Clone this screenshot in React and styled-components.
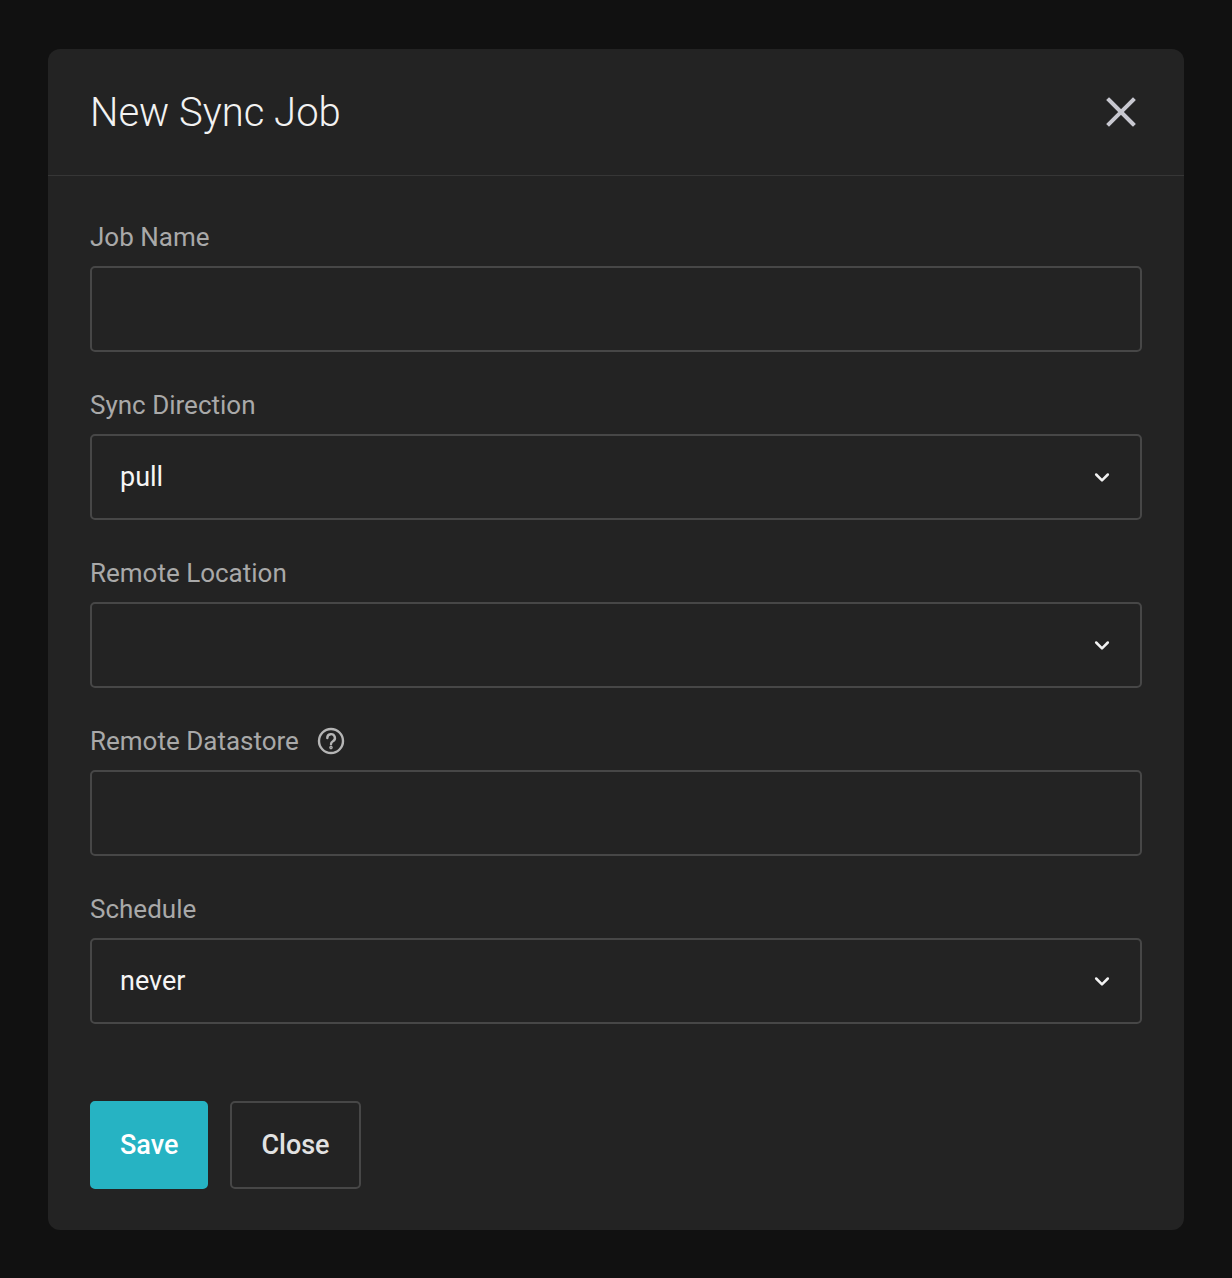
import React from 'react'
import styled, { createGlobalStyle } from 'styled-components'

const GlobalStyle = createGlobalStyle`
  html, body {
    margin: 0;
    background: #111111;
    font-family: Roboto, "Liberation Sans", sans-serif;
  }
`

const Page = styled.div`
  padding: 49px 48px 48px 48px;
`

const Modal = styled.div`
  background: #232323;
  border-radius: 12px;
  width: 1136px;
  height: 1181px;
  box-sizing: border-box;
  display: flex;
  flex-direction: column;
`

const Header = styled.div`
  height: 127px;
  box-sizing: border-box;
  border-bottom: 1px solid #363636;
  display: flex;
  align-items: center;
  justify-content: space-between;
  padding: 0 48px 0 42px;
`

const Title = styled.h1`
  margin: 0;
  font-size: 40px;
  font-weight: 300;
  color: #f2f2f2;
`

const CloseIcon = styled.button`
  background: none;
  border: none;
  padding: 0;
  display: flex;
  cursor: pointer;
`

const Body = styled.div`
  padding: 46px 42px 41px 42px;
  display: flex;
  flex-direction: column;
  flex: 1;
`

const Field = styled.div`
  display: flex;
  flex-direction: column;
  margin-bottom: 38px;
`

const Label = styled.label`
  font-size: 26px;
  line-height: 30px;
  color: #a9a9a9;
  margin-bottom: 14px;
  display: flex;
  align-items: center;
  gap: 18px;
`

const Input = styled.div`
  height: 86px;
  box-sizing: border-box;
  border: 2px solid #474747;
  border-radius: 5px;
  display: flex;
  align-items: center;
  justify-content: space-between;
  padding: 0 28px 0 28px;
  font-size: 27px;
  color: #f5f5f5;
`

const Buttons = styled.div`
  margin-top: auto;
  display: flex;
  gap: 22px;
`

const Button = styled.button`
  height: 88px;
  border-radius: 5px;
  font-family: Roboto, "Liberation Sans", sans-serif;
  font-size: 27px;
  font-weight: 500;
  padding: 0 ${p => (p.primary ? '28px' : '29px')};
  background: ${p => (p.primary ? '#26b3c3' : '#232323')};
  color: ${p => (p.primary ? '#ffffff' : '#e2e2e2')};
  border: 2px solid ${p => (p.primary ? '#26b3c3' : '#474747')};
  box-sizing: border-box;
`

const Chevron = () => (
  <svg width="20" height="20" viewBox="0 0 24 24" fill="none" stroke="#f2f2f2" strokeWidth="3" strokeLinecap="round" strokeLinejoin="round">
    <path d="M5 9l7 7 7-7" />
  </svg>
)

const HelpIcon = () => (
  <svg width="28" height="28" viewBox="0 0 28 28" fill="none" stroke="#b5b5b5" strokeWidth="2.4" strokeLinecap="round">
    <circle cx="14" cy="14" r="12" />
    <path d="M10.3 11a3.8 3.8 0 1 1 5.6 3.3c-1.2.7-1.9 1.4-1.9 2.9" />
    <circle cx="14" cy="20.6" r="0.6" fill="#b5b5b5" />
  </svg>
)

const fields = [
  { label: 'Job Name' },
  { label: 'Sync Direction', value: 'pull', select: true },
  { label: 'Remote Location', select: true },
  { label: 'Remote Datastore', help: true },
  { label: 'Schedule', value: 'never', select: true },
]

export default function App() {
  return (
    <Page>
      <GlobalStyle />
      <Modal>
        <Header>
          <Title>New Sync Job</Title>
          <CloseIcon aria-label="close">
            <svg width="30" height="30" viewBox="0 0 30 30" stroke="#c8c8d0" strokeWidth="4" strokeLinecap="square">
              <path d="M3 3l24 24M27 3L3 27" />
            </svg>
          </CloseIcon>
        </Header>
        <Body>
          {fields.map(f => (
            <Field key={f.label}>
              <Label>
                {f.label}
                {f.help && <HelpIcon />}
              </Label>
              <Input>
                <span>{f.value || ''}</span>
                {f.select && <Chevron />}
              </Input>
            </Field>
          ))}
          <Buttons>
            <Button primary>Save</Button>
            <Button>Close</Button>
          </Buttons>
        </Body>
      </Modal>
    </Page>
  )
}
